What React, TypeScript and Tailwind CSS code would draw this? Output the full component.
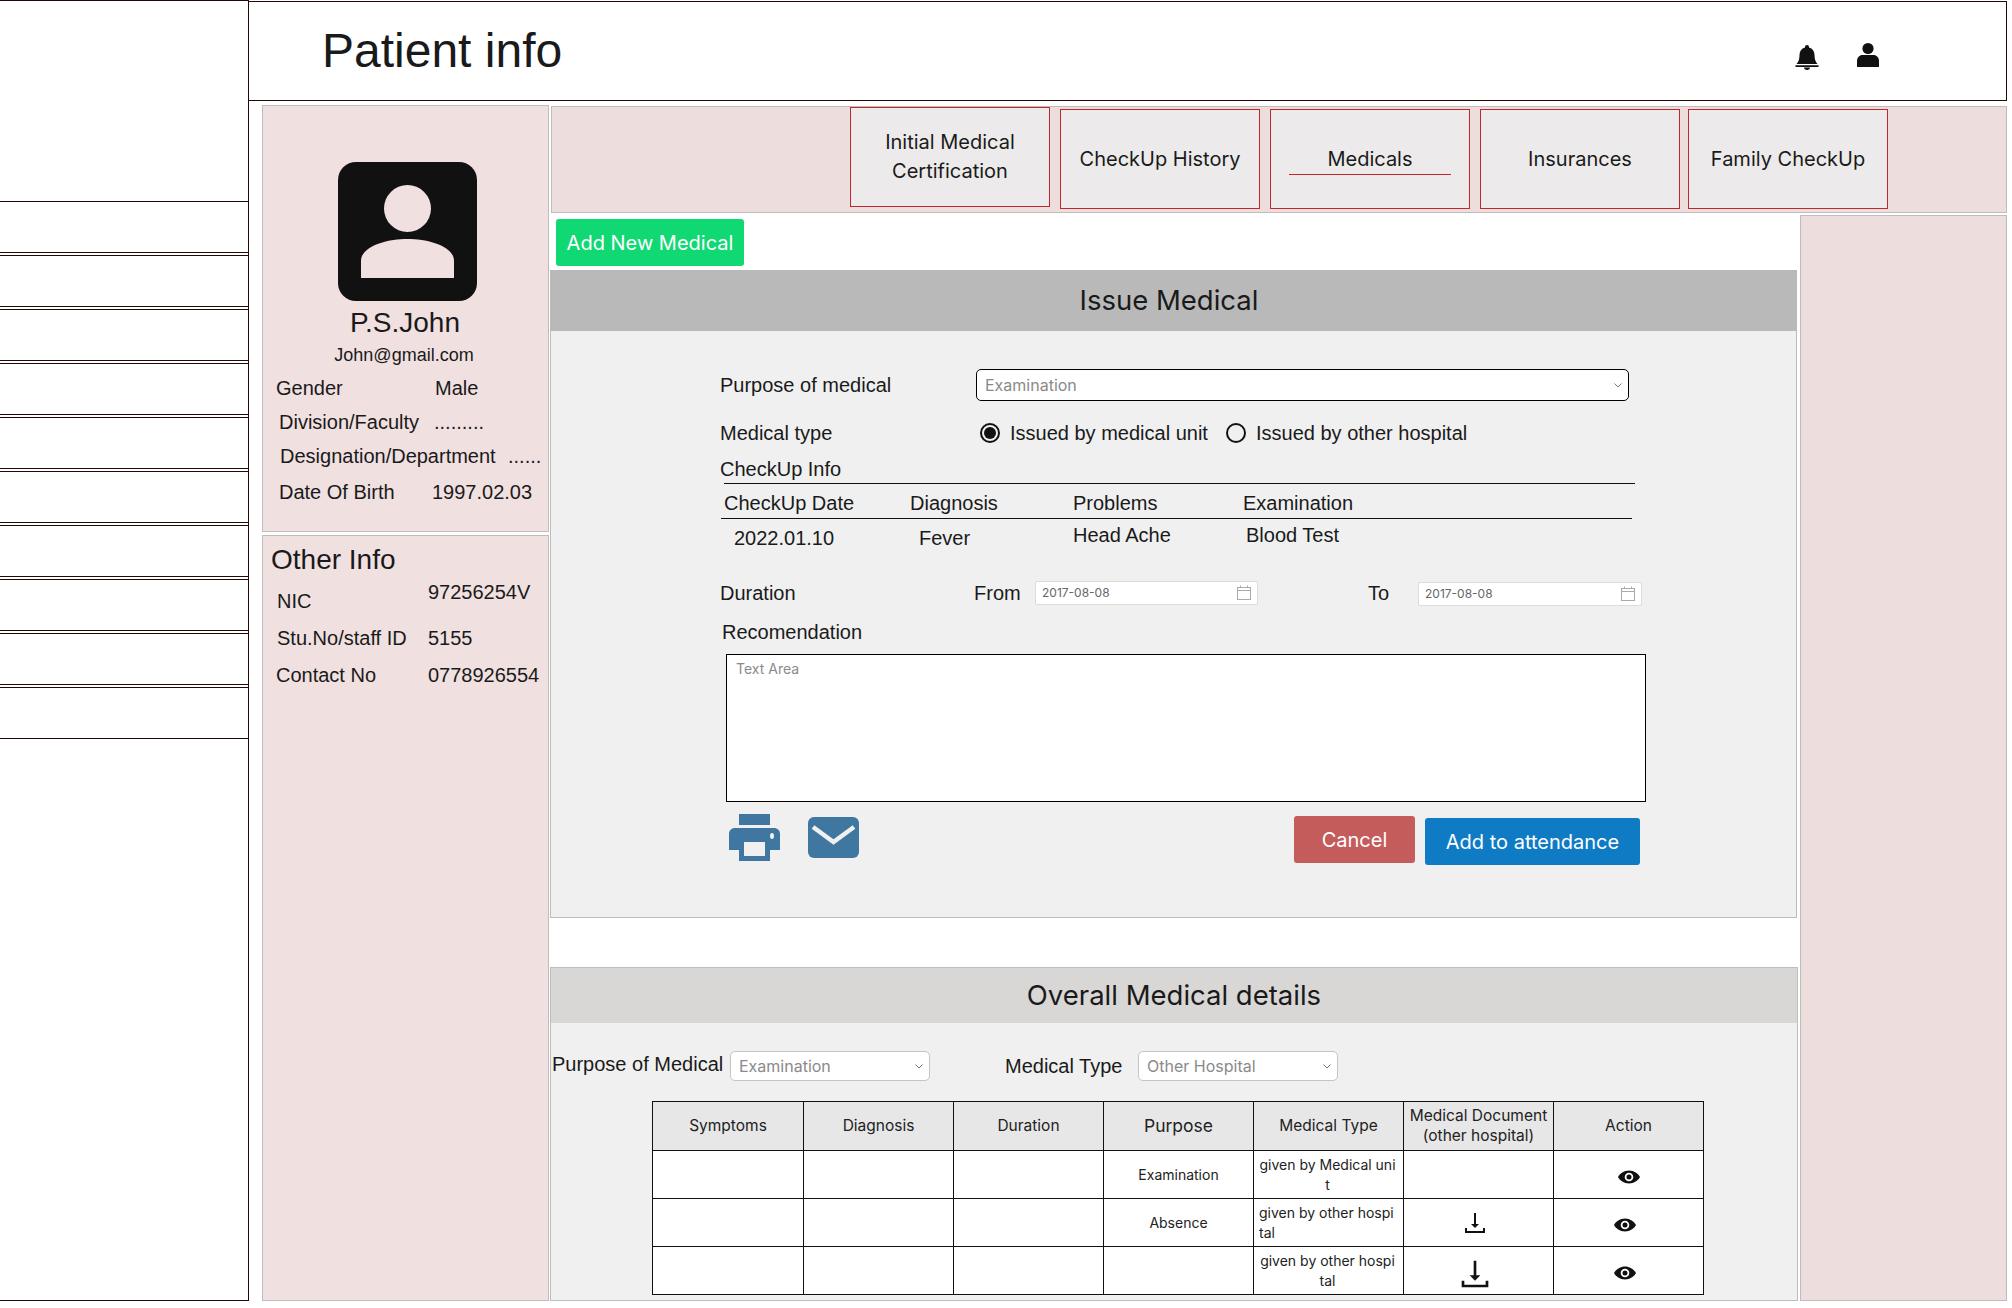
import React from 'react';

const sideItems = [1, 2, 3, 4, 5, 6, 7, 8, 9, 10];

const tabs = [
  { label: 'Initial Medical Certification', cls: 'mr-[10px]' },
  { label: 'CheckUp History', cls: 'mt-[2px] mr-[10px]' },
  { label: 'Medicals', cls: 'mt-[2px] mr-[10px]', active: true },
  { label: 'Insurances', cls: 'mt-[2px] mr-[8px]' },
  { label: 'Family CheckUp', cls: 'mt-[2px]' },
];

const rows = [
  { purpose: 'Examination', type: 'given by Medical unit', typeCls: 'text-center', download: 0, dlCls: '', eyeCls: 'ml-px' },
  { purpose: 'Absence', type: 'given by other hospital', typeCls: 'text-left', download: 24, dlCls: '', eyeCls: '-ml-[8px]' },
  { purpose: '', type: 'given by other hospital', typeCls: 'text-center', download: 32, dlCls: 'mt-[6px]', eyeCls: '-ml-[8px]' },
];

const Chevron = () => (
  <svg width="10" height="10" viewBox="0 0 10 10" fill="none" stroke="#777" strokeWidth="1">
    <path d="M1.5 3.5 5 7l3.5-3.5" />
  </svg>
);

const Calendar = () => (
  <svg width="14" height="15" viewBox="0 0 14 15" fill="none" stroke="#aaa" strokeWidth="1">
    <rect x="0.5" y="2.5" width="13" height="12" />
    <path d="M0.5 5.5h13M3.5 0.5v2M10.5 0.5v2" />
  </svg>
);

const Eye = () => (
  <svg width="24" height="24" viewBox="0 0 24 24" fill="#111">
    <path d="M12 5.5C7 5.5 2.7 8.6 1 12c1.7 3.4 6 6.5 11 6.5s9.3-3.1 11-6.5c-1.7-3.4-6-6.5-11-6.5Zm0 10.8a4.3 4.3 0 1 1 0-8.6 4.3 4.3 0 0 1 0 8.6Zm0-6.8a2.5 2.5 0 1 0 0 5 2.5 2.5 0 0 0 0-5Z" />
  </svg>
);

const Download = ({ size }: { size: number }) => (
  <svg width={size} height={size} viewBox="0 0 24 24" fill="#111">
    <path d="M11 2h2v11h3l-4 4-4-4h3V2Z" />
    <path d="M2 17h2v3h16v-3h2v5H2v-5Z" />
  </svg>
);

const DateBox = ({ cls }: { cls: string }) => (
  <div className={`flex items-center justify-between bg-white border border-[#dcdcdc] rounded-[2px] pl-[6px] pr-[6px] font-['Inter',sans-serif] text-[12px] text-[#666] ${cls}`}>
    <span>2017-08-08</span>
    <Calendar />
  </div>
);

const Select = ({ value, cls }: { value: string; cls: string }) => (
  <div className={`flex items-center justify-between bg-white pl-2 pr-[5px] font-['Inter',sans-serif] text-[16px] text-[#8a8a8a] ${cls}`}>
    <span>{value}</span>
    <Chevron />
  </div>
);

export default function App() {
  return (
    <div className="flex w-[2012px] h-[1308px] bg-white font-['Liberation_Sans',sans-serif] text-[#1a1a1a] overflow-hidden">
      {/* sidebar */}
      <aside className="w-[249px] h-[1301px] shrink-0 border-r border-t border-b border-[#230808] pt-[200px] flex flex-col gap-[2px]">
        {sideItems.map((i) => (
          <div key={i} className="h-[52px] border-t border-b border-[#230808]" />
        ))}
      </aside>

      <div className="w-[1758px] flex flex-col">
        {/* top bar */}
        <header className="h-[100px] shrink-0 border-t border-r border-b border-[#230808] flex items-center pl-[73px] pr-[127px] mt-px">
          <h1 className="text-[48px] leading-none flex-1 -mt-[1px]">Patient info</h1>
          <svg width="24" height="25" viewBox="0 0 24 25" fill="#111" className="mt-[12px] mr-[38px]">
            <path d="M12 0c1.2 0 2 .9 2 2v.6c3.6 1 5.5 4 5.5 7.4 0 4 1 7 3 9H1.5c2-2 3-5 3-9 0-3.400 1.900-6.400 5.500-7.400V2c0-1.100.8-2 2-2Z" />
            <path d="M0.500 20.200h23V22h-23zM9 22.500h6c0 1.400-1.300 2.500-3 2.500s-3-1.100-3-2.500Z" />
          </svg>
          <svg width="22" height="24" viewBox="0 0 22 24" fill="#111" className="mt-[8px]">
            <ellipse cx="11" cy="5.500" rx="5.600" ry="5.500" />
            <path d="M0 24v-6c0-3.500 2.500-6 5.500-6h11c3 0 5.500 2.500 5.500 6v6H0Z" />
          </svg>
        </header>

        <div className="flex pt-[4px]">
          {/* patient column */}
          <div className="w-[287px] ml-[13px] mr-[2px] shrink-0 flex flex-col gap-[3px]">
            <section className="h-[427px] bg-[#f0e0e0] border border-[#bdbdbd] flex flex-col">
              <svg width="139" height="139" viewBox="0 0 139 139" className="mt-[56px] ml-[75px]">
                <rect width="139" height="139" rx="18" fill="#111" />
                <circle cx="69.500" cy="46.500" r="23.500" fill="#f0e0e0" />
                <path d="M23 116V99c0-15 26-22 46.500-22S116 84 116 99v17H23Z" fill="#f0e0e0" />
              </svg>
              <div className="text-[28px] leading-[32px] text-center mt-[6px] pr-[1px]">P.S.John</div>
              <div className="text-[18px] leading-[24px] text-center mt-[4px] pr-[3px]">John@gmail.com</div>
              <div className="flex text-[20px] leading-[24px] mt-[9px] ml-[13px]"><span className="w-[159px]">Gender</span><span>Male</span></div>
              <div className="flex text-[20px] leading-[24px] mt-[10px] ml-[16px]"><span className="w-[155px]">Division/Faculty</span><span>.........</span></div>
              <div className="flex text-[20px] leading-[24px] mt-[10px] ml-[17px]"><span className="w-[228px]">Designation/Department</span><span>......</span></div>
              <div className="flex text-[20px] leading-[24px] mt-[12px] ml-[16px]"><span className="w-[153px]">Date Of Birth</span><span>1997.02.03</span></div>
            </section>
            <section className="h-[766px] bg-[#f0e0e0] border border-[#bdbdbd] flex flex-col">
              <div className="text-[28px] leading-[32px] mt-[8px] ml-[8px]">Other Info</div>
              <div className="flex text-[20px] leading-[24px] ml-[14px] mt-[4px]"><span className="w-[151px] mt-[9px]">NIC</span><span>97256254V</span></div>
              <div className="flex text-[20px] leading-[24px] ml-[14px] mt-[13px]"><span className="w-[151px]">Stu.No/staff ID</span><span>5155</span></div>
              <div className="flex text-[20px] leading-[24px] ml-[13px] mt-[13px]"><span className="w-[152px]">Contact No</span><span>0778926554</span></div>
            </section>
          </div>

          <div className="w-[1456px] flex flex-col">
            {/* tabs */}
            <nav className="h-[107px] mt-px bg-[#eedddd] border border-[#bdbdbd] flex items-start pl-[298px] font-['Inter',sans-serif]">
              {tabs.map((t) => (
                <div key={t.label} className={`${t.cls} w-[200px] h-[100px] bg-[#eceaea] border border-[#c1272d] flex items-center justify-center text-center text-[20px] leading-[29px]`}>
                  {t.active ? (
                    <span className="w-[162px] border-b border-[#c1272d] -mb-[1px]">{t.label}</span>
                  ) : (
                    <span className="w-[170px]">{t.label}</span>
                  )}
                </div>
              ))}
            </nav>

            <div className="flex">
              <main className="w-[1247px] -ml-px flex flex-col">
                <div className="h-[57px] pt-[6px] pl-[6px]">
                  <button className="w-[188px] h-[47px] rounded-[3px] bg-[#10d873] text-white font-['Inter',sans-serif] text-[20px]">Add New Medical</button>
                </div>

                {/* issue medical */}
                <section className="border-x border-b border-[#bdbdbd] bg-[#f0f0f0]">
                  <div className="h-[61px] bg-[#b9b9b9] -mx-px flex items-center justify-center font-['Inter',sans-serif] text-[27.5px] pr-[9px]">Issue Medical</div>
                  <div className="h-[586px] pt-[38px] pl-[169px] text-[20px]">
                    <div className="flex items-center h-[32px]">
                      <span className="w-[256px]">Purpose of medical</span>
                      <Select value="Examination" cls="w-[653px] h-[32px] border border-black rounded-[5px]" />
                    </div>
                    <div className="flex items-center h-[30px] mt-[17px]">
                      <span className="w-[260px]">Medical type</span>
                      <span className="w-5 h-5 rounded-full border-2 border-[#111] flex items-center justify-center"><span className="w-3 h-3 rounded-full bg-[#111]" /></span>
                      <span className="ml-[10px] w-[216px]">Issued by medical unit</span>
                      <span className="w-5 h-5 rounded-full border-2 border-[#111]" />
                      <span className="ml-[10px]">Issued by other hospital</span>
                    </div>
                    <div className="h-[29px] leading-[30px] mt-[6px]">CheckUp Info</div>
                    <div className="h-px w-[911px] ml-[4px] bg-[#111]" />
                    <div className="flex items-center h-[34px] pl-[4px] pt-[3px]">
                      <span className="w-[186px]">CheckUp Date</span>
                      <span className="w-[163px]">Diagnosis</span>
                      <span className="w-[170px]">Problems</span>
                      <span>Examination</span>
                    </div>
                    <div className="h-px w-[911px] ml-px bg-[#111]" />
                    <div className="flex h-[59px] leading-[24px] pl-[14px]">
                      <span className="w-[185px] mt-[7px]">2022.01.10</span>
                      <span className="w-[154px] mt-[7px]">Fever</span>
                      <span className="w-[173px] mt-[4px]">Head Ache</span>
                      <span className="mt-[4px]">Blood Test</span>
                    </div>
                    <div className="flex h-[30px] items-center">
                      <span className="w-[254px]">Duration</span>
                      <span className="w-[61px]">From</span>
                      <DateBox cls="w-[223px] h-[24px] -mt-[1px]" />
                      <span className="ml-[110px] w-[50px]">To</span>
                      <DateBox cls="w-[224px] h-[24px] mt-px" />
                    </div>
                    <div className="h-[30px] leading-[30px] mt-[9px] ml-[2px]">Recomendation</div>
                    <div className="w-[920px] h-[148px] ml-[6px] mt-[7px] bg-white border border-black px-[9px] py-[3px] font-['Inter',sans-serif] text-[14px] text-[#8a8a8a]">Text Area</div>
                    <div className="flex items-start mt-[12px] ml-[9px]">
                      <svg width="51" height="47" viewBox="0 0 51 47" fill="#3f77a0">
                        <rect x="10" y="0" width="31" height="11" />
                        <path fillRule="evenodd" d="M6 14h39c3.500 0 6 2.500 6 6v16h-10v11H10V36H0V20c0-3.500 2.500-6 6-6Zm9 14v14h21V28H15Zm28-9a2 3 0 1 0 0 6 2 3 0 0 0 0-6Z" />
                      </svg>
                      <svg width="51" height="41" viewBox="0 0 51 41" className="ml-[28px] mt-[3px]">
                        <rect width="51" height="41" rx="6" fill="#3f77a0" />
                        <path d="M5 10l20.500 15L46 10" fill="none" stroke="#f0f0f0" strokeWidth="4.500" />
                      </svg>
                      <button className="w-[121px] h-[47px] ml-[435px] mt-[2px] rounded-[3px] bg-[#c45c5c] text-white font-['Inter',sans-serif] text-[20px]">Cancel</button>
                      <button className="w-[215px] h-[47px] ml-[10px] mt-[4px] rounded-[3px] bg-[#0f7bc4] text-white font-['Inter',sans-serif] text-[20px]">Add to attendance</button>
                    </div>
                  </div>
                </section>

                {/* overall details */}
                <section className="mt-[49px] border border-[#bdbdbd] bg-[#f0f0f0] w-[1248px] h-[334px]">
                  <div className="h-[55px] bg-[#d9d6d6] flex items-center justify-center font-['Inter',sans-serif] text-[27.5px]">Overall Medical details</div>
                  <div className="flex items-start h-[78px] text-[20px] pt-[28px] pl-px">
                    <span className="w-[178px] leading-[24px] mt-px">Purpose of Medical</span>
                    <Select value="Examination" cls="w-[200px] h-[30px] border border-[#c4c4c4] rounded-[5px]" />
                    <span className="ml-[75px] w-[133px] leading-[24px] mt-[3px]">Medical Type</span>
                    <Select value="Other Hospital" cls="w-[200px] h-[30px] border border-[#c4c4c4] rounded-[5px]" />
                  </div>
                  <table className="ml-[101px] w-[1051px] table-fixed border-collapse border border-[#111] font-['Inter',sans-serif] text-[14px] text-[#222]">
                    <colgroup>
                      <col className="w-[151px]" />
                      <col className="w-[150px]" />
                      <col className="w-[150px]" />
                      <col className="w-[150px]" />
                      <col className="w-[150px]" />
                      <col className="w-[150px]" />
                      <col className="w-[150px]" />
                    </colgroup>
                    <thead className="bg-[#e7e7e7] text-[15.5px]">
                      <tr className="h-[49px]">
                        {['Symptoms', 'Diagnosis', 'Duration'].map((h) => (
                          <th key={h} className="border border-[#111] font-normal">{h}</th>
                        ))}
                        <th className="border border-[#111] font-normal text-[17.5px]">Purpose</th>
                        <th className="border border-[#111] font-normal">Medical Type</th>
                        <th className="border border-[#111] font-normal leading-[20px]">Medical Document<br />(other hospital)</th>
                        <th className="border border-[#111] font-normal">Action</th>
                      </tr>
                    </thead>
                    <tbody className="bg-white">
                      {rows.map((r, i) => (
                        <tr key={i} className="h-[48px]">
                          <td className="border border-[#111]" />
                          <td className="border border-[#111]" />
                          <td className="border border-[#111]" />
                          <td className="border border-[#111] text-center">{r.purpose}</td>
                          <td className={`border border-[#111] pl-[5px] pr-[7px] leading-[20px] break-all ${r.typeCls}`}>{r.type}</td>
                          <td className="border border-[#111]">
                            {r.download > 0 && (
                              <div className={`flex justify-center -ml-[8px] ${r.dlCls}`}><Download size={r.download} /></div>
                            )}
                          </td>
                          <td className="border border-[#111]">
                            <div className={`flex justify-center mt-[4px] ${r.eyeCls}`}><Eye /></div>
                          </td>
                        </tr>
                      ))}
                    </tbody>
                  </table>
                </section>
              </main>

              <aside className="w-[207px] h-[1086px] ml-[3px] mt-[2px] bg-[#eedddd] border border-[#bdbdbd]" />
            </div>
          </div>
        </div>
      </div>
    </div>
  );
}
